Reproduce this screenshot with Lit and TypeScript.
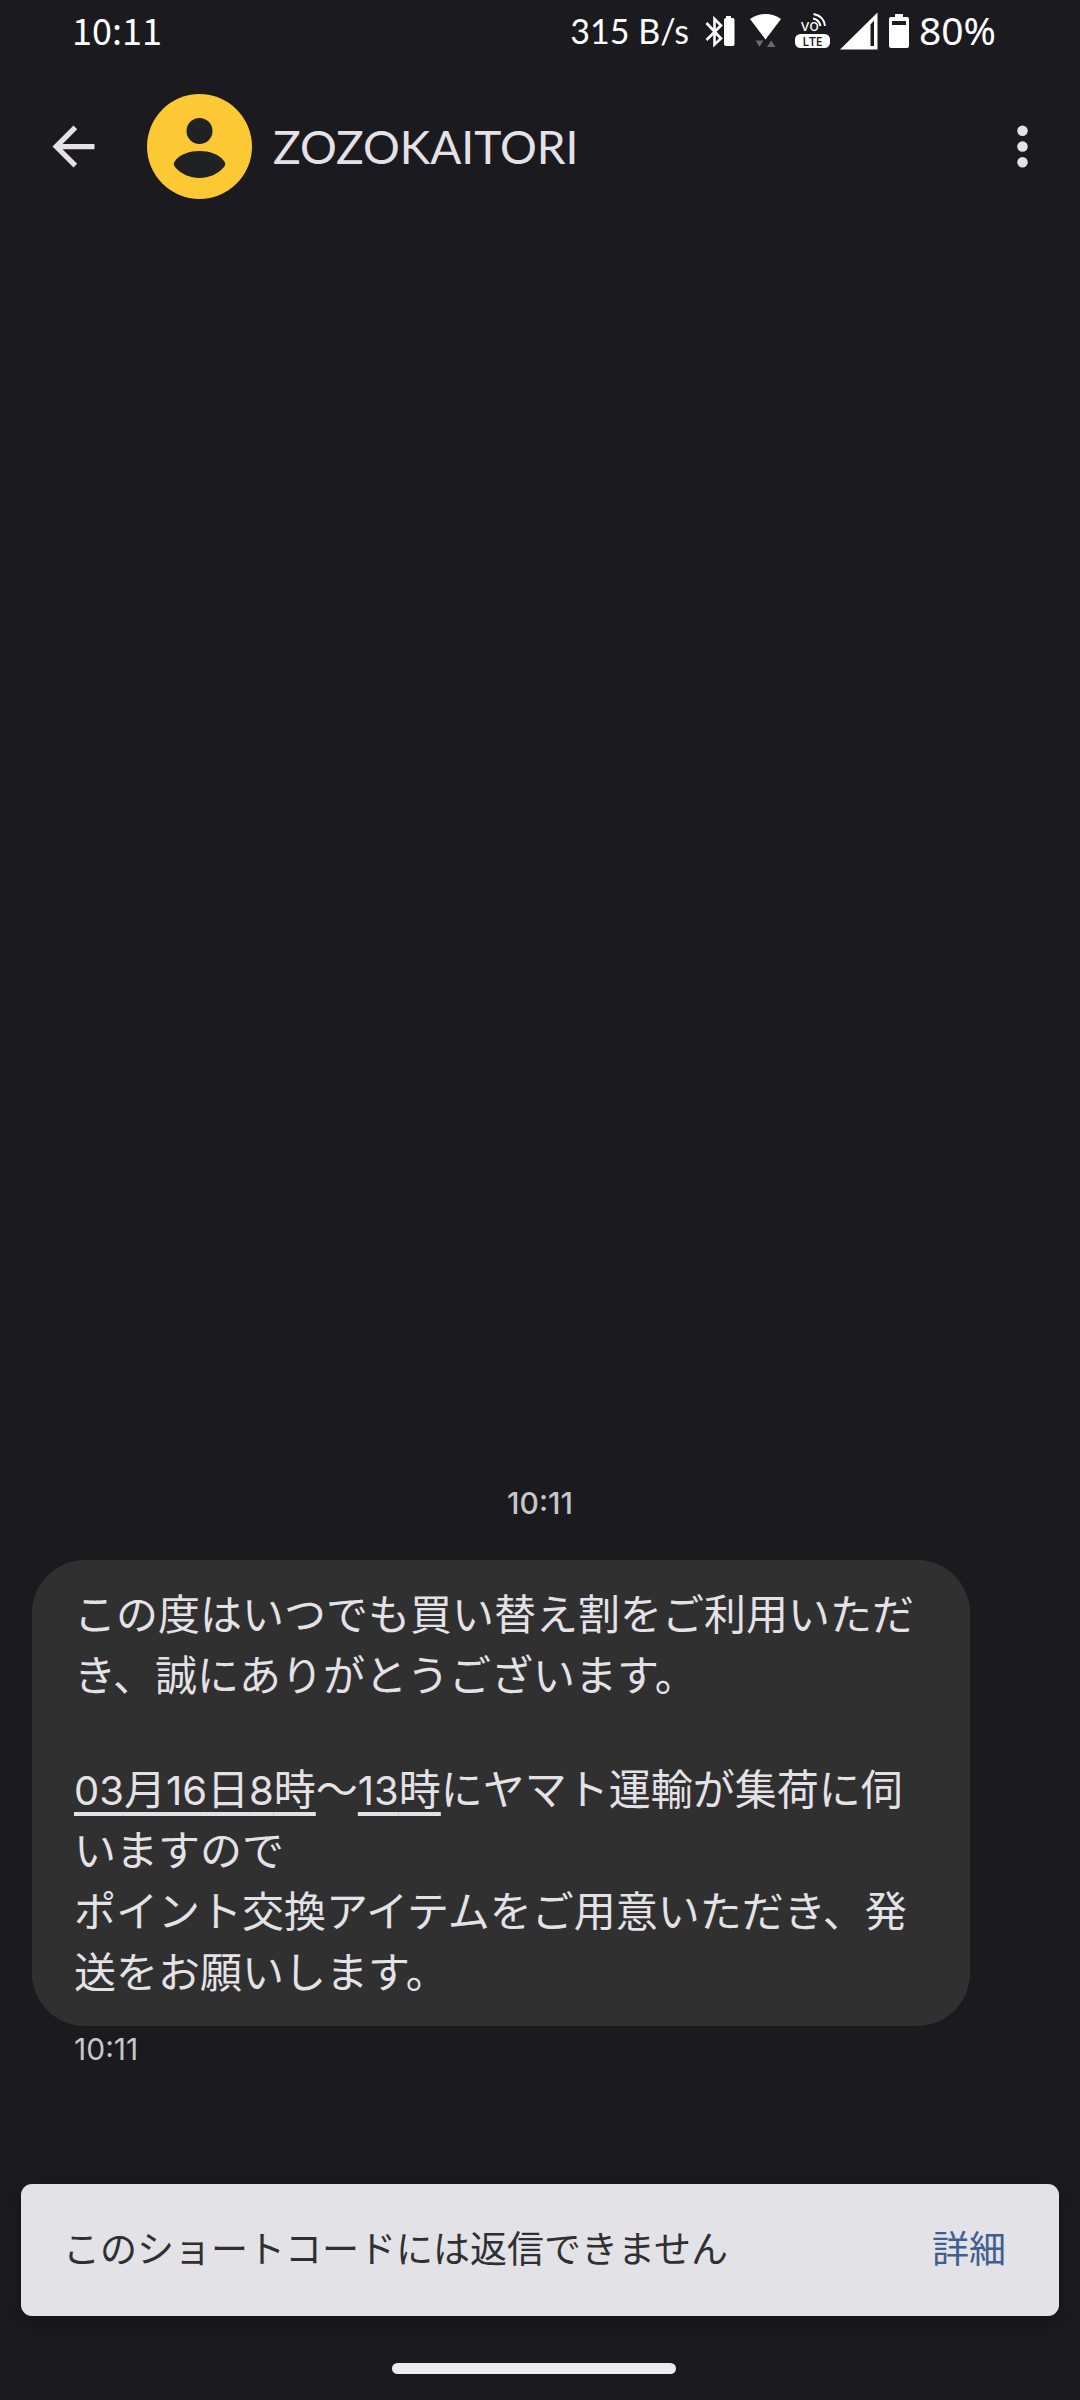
import { LitElement, html, css, svg } from "lit";
import { customElement, property } from "lit/decorators.js";

@customElement("status-bar")
class StatusBar extends LitElement {
  @property() time = "";
  @property() speed = "";
  @property() battery = "";

  static styles = css`
    :host {
      display: flex;
      align-items: flex-start;
      justify-content: space-between;
      height: 64px;
      padding: 0 84px 0 72px;
      color: #fff;
    }
    .time {
      font: 36px/58px "Noto Sans CJK JP", sans-serif;
    }
    .right {
      display: flex;
      align-items: flex-start;
    }
    .speed {
      font: 34px/62px Lato, sans-serif;
      margin-right: 16px;
    }
    .battery {
      font: 39px/60px "Noto Sans", sans-serif;
    }
    svg {
      display: block;
      fill: #fff;
    }
    .small {
      font: 16px "Noto Sans", sans-serif;
    }
    .lte {
      font: 600 12px "Open Sans", sans-serif;
      fill: #1b1b1f;
    }
  `;

  render() {
    return html`
      <span class="time">${this.time}</span>
      <div class="right">
        <span class="speed">${this.speed}</span>
        <svg width="214" height="64" viewBox="705 0 214 64" aria-hidden="true">
          ${svg`
          <path d="M706.500 23 L721 38.500 L714.500 44.500 V19 L721 25.500 L706.500 40" fill="none" stroke="#fff" stroke-width="2.600"/>
          <path d="M726 18 V16 H731 V18 H733 Q734.500 18 734.500 20 V44 Q734.500 46 733 46 H726 Q724 46 724 44 V20 Q724 18 726 18 Z"/>
          <path d="M765.500 39.500 L750 19 Q757 14 765.500 14 T781 19 Z"/>
          <path d="M755.500 40.500 H763.500 L759.500 47 Z M767 47 H775.500 L771.200 40.500 Z" fill="#6a6a6c"/>
          <text class="small" x="801" y="31">vo</text>
          <path d="M813 18.500 Q819 19.500 820.500 26 M813.500 14 Q824 16 825 26" fill="none" stroke="#fff" stroke-width="2"/>
          <rect x="795" y="34" width="35" height="14" rx="5.500"/>
          <text class="lte" x="812.500" y="45.500" text-anchor="middle">LTE</text>
          <path d="M840 49.500 L877.500 12.500 V49.500 Z"/>
          <path d="M870.500 24.500 L874 20.500 V46 H870.500 Z" fill="#1b1b1f"/>
          <path d="M895 17 V14 H903 V17 H907 Q909 17 909 19 V46 Q909 48 907 48 H891 Q889 48 889 46 V19 Q889 17 891 17 Z"/>
          <path d="M892 21 H906 V25 H892 Z" fill="#1b1b1f"/>`}
        </svg>
        <span class="battery">${this.battery}</span>
      </div>
    `;
  }
}

@customElement("chat-header")
class ChatHeader extends LitElement {
  @property() name = "";

  static styles = css`
    :host {
      display: flex;
      align-items: center;
      padding: 30px 26px 30px 42px;
    }
    button {
      display: block;
      padding: 0;
      border: 0;
      background: none;
      color: #e4e2e6;
    }
    svg {
      display: block;
      fill: currentColor;
    }
    .avatar {
      margin: 0 21px 0 42px;
    }
    h1 {
      flex: 1;
      margin: 0;
      font: 400 46px/64px Lato, sans-serif;
      color: #e4e2e6;
    }
  `;

  render() {
    return html`
      <button aria-label="戻る">
        <svg width="63" height="63" viewBox="0 0 24 24">
          <path d="M20 11H7.830l5.590-5.590L12 4l-8 8 8 8 1.410-1.410L7.830 13H20v-2z" />
        </svg>
      </button>
      <svg class="avatar" width="105" height="105" viewBox="0 0 105 105" aria-hidden="true">
        <circle cx="52.500" cy="52.500" r="52.500" fill="#fcc934" />
        <circle cx="52.500" cy="37" r="13" fill="#202124" />
        <path
          d="M28 67 C33 60 43 57 52.500 57 S72 60 77 67 Q79.500 70 77 73 C71 80 62 84 52.500 84 S34 80 28 73 Q25.500 70 28 67 Z"
          fill="#202124"
        />
      </svg>
      <h1>${this.name}</h1>
      <button aria-label="その他のオプション">
        <svg width="63" height="63" viewBox="0 0 24 24">
          <circle cx="12" cy="6" r="2" />
          <circle cx="12" cy="12" r="2" />
          <circle cx="12" cy="18" r="2" />
        </svg>
      </button>
    `;
  }
}

@customElement("app-root")
class AppRoot extends LitElement {
  static styles = css`
    :host {
      display: flex;
      flex-direction: column;
      min-height: 100vh;
      background: #1b1b1f;
      color: #e4e2e6;
      font-family: Inter, "Noto Sans CJK JP", sans-serif;
    }
    main {
      flex: 1;
      display: flex;
      flex-direction: column;
      justify-content: flex-end;
      align-items: flex-start;
      padding: 0 32px 112px;
    }
    .divider {
      align-self: center;
      margin-bottom: 36px;
      font-size: 30px;
      line-height: 42px;
      font-weight: 500;
      color: #c7c6ca;
    }
    .bubble {
      box-sizing: border-box;
      max-width: 938px;
      padding: 24px 42px 23px;
      border-radius: 53px;
      background: #303031;
      font-size: 42px;
      line-height: 61px;
    }
    .bubble p {
      margin: 0;
    }
    .bubble .greeting {
      margin-bottom: 53px;
    }
    .bubble a {
      color: inherit;
      text-decoration: underline;
      text-decoration-thickness: 4px;
      text-underline-offset: 7px;
      text-decoration-skip-ink: none;
    }
    .num {
      font-size: 40px;
      line-height: 1;
    }
    .sent {
      margin: 0 42px;
      font-size: 30px;
      line-height: 46px;
      color: #c7c6ca;
    }
    .snackbar {
      display: flex;
      align-items: center;
      justify-content: space-between;
      margin: 0 21px;
      padding: 0 53px 0 42px;
      min-height: 132px;
      border-radius: 11px;
      background: #e3e2e6;
      color: #303033;
      font-size: 37px;
      line-height: 54px;
      box-shadow: 0 8px 16px rgba(16, 18, 16, 0.6);
    }
    .snackbar button {
      padding: 0;
      border: 0;
      background: none;
      font: inherit;
      color: #415e91;
    }
    .navigation {
      display: flex;
      justify-content: center;
      padding: 47px 12px 26px 0;
    }
    .gesture {
      width: 284px;
      height: 11px;
      border-radius: 6px;
      background: #ececec;
    }
  `;

  render() {
    const num = (value: string) => html`<span class="num">${value}</span>`;
    return html`
      <status-bar time="10:11" speed="315 B/s" battery="80%"></status-bar>
      <chat-header name="ZOZOKAITORI"></chat-header>
      <main>
        <time class="divider">10:11</time>
        <article class="bubble">
          <p class="greeting">この度はいつでも買い替え割をご利用いただき、誠にありがとうございます。</p>
          <p>
            <a href="#pickup-start">${num("03")}月${num("16")}日${num("8")}時</a>〜<a href="#pickup-end">${num("13")}時</a>にヤマト運輸が集荷に伺いますので
          </p>
          <p>ポイント交換アイテムをご用意いただき、発送をお願いします。</p>
        </article>
        <time class="sent">10:11</time>
      </main>
      <div class="snackbar" role="status">
        <span>このショートコードには返信できません</span>
        <button>詳細</button>
      </div>
      <div class="navigation"><div class="gesture"></div></div>
    `;
  }
}
